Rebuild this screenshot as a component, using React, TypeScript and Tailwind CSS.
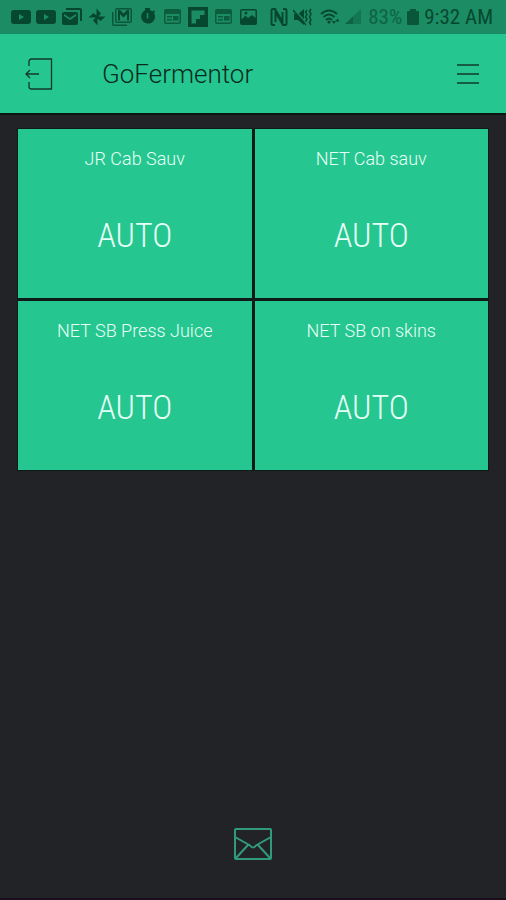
import React from 'react';

interface Tank {
    id: number;
    name: string;
    mode: string;
}

const tanks: Tank[] = [
    { id: 1, name: 'JR Cab Sauv', mode: 'AUTO' },
    { id: 2, name: 'NET Cab sauv', mode: 'AUTO' },
    { id: 3, name: 'NET SB Press Juice', mode: 'AUTO' },
    { id: 4, name: 'NET SB on skins', mode: 'AUTO' },
];

const StatusIcon: React.FC<{ children: React.ReactNode }> = ({ children }) => (
    <svg viewBox="0 0 20 20" className="h-5 w-5 shrink-0" fill="currentColor" aria-hidden="true">
        {children}
    </svg>
);

const VideoIcon = () => (
    <StatusIcon>
        <path fillRule="evenodd" d="M3 3h14a3 3 0 0 1 3 3v8a3 3 0 0 1-3 3H3a3 3 0 0 1-3-3V6a3 3 0 0 1 3-3zm5 4v6l5-3z" />
    </StatusIcon>
);

const CardIcon = () => (
    <StatusIcon>
        <g className="opacity-70">
            <path fillRule="evenodd" d="M3 2h13a2 2 0 0 1 2 2v11a2 2 0 0 1-2 2H3a2 2 0 0 1-2-2V4a2 2 0 0 1 2-2zm-.5 5v8.500h14V7z" />
            <path d="M4 9h5v1.500H4zM4 12h5v1.500H4zM10 9h5.500v4.500H10z" />
        </g>
    </StatusIcon>
);

const StatusBar: React.FC = () => (
    <div className="flex h-[34px] items-center bg-[#1b8c64] pl-[11px] pr-[13px] text-[#06482f]">
        <div className="mr-[11px] flex flex-1 items-center justify-between">
            <VideoIcon />
            <VideoIcon />
            {/* Mail stack */}
            <StatusIcon>
                <path d="M4 1h14a2 2 0 0 1 2 2v11h-2V3H4z" />
                <path fillRule="evenodd" d="M2 5h12a2 2 0 0 1 2 2v9a2 2 0 0 1-2 2H2a2 2 0 0 1-2-2V7a2 2 0 0 1 2-2zm0 2v2l6 4 6-4V7l-6 4z" />
            </StatusIcon>
            {/* Pinwheel */}
            <StatusIcon>
                <path d="M9.500 10V1.500L14 6.500l-3 3.500zM10 9.500h8.500L13.500 14 10 11zM10.500 10v8.500L6 13.500 9 10zM10 10.500H1.500L6.500 6l3.500 3z" />
            </StatusIcon>
            {/* Gmail stack */}
            <StatusIcon>
                <path d="M0 5h1.500v12.500H15V19H2a2 2 0 0 1-2-2z" className="opacity-80" />
                <path fillRule="evenodd" d="M5 1h13a2 2 0 0 1 2 2v11a2 2 0 0 1-2 2H5a2 2 0 0 1-2-2V3a2 2 0 0 1 2-2zm-.5 1.500v12h14v-12z" className="opacity-80" />
                <path d="M6 3h2l3.500 3.500L15 3h2v10.500h-2V7l-3.500 3.500L8 7v6.500H6z" />
            </StatusIcon>
            {/* Timer */}
            <StatusIcon>
                <path fillRule="evenodd" d="M7 1h5v2.200a7 7 0 0 1 2.500 1.200l1.200-1.200 1.500 1.500-1.200 1.200A7 7 0 1 1 7 3.300zm1.800 5v5.500h1.500V6z" />
            </StatusIcon>
            <CardIcon />
            {/* Flipboard */}
            <StatusIcon>
                <path fillRule="evenodd" d="M0 0h20v20H0zM3.500 3.500v13H8V12h4V8h4.500V3.500z" />
            </StatusIcon>
            <CardIcon />
            {/* Picture */}
            <StatusIcon>
                <path fillRule="evenodd" d="M3 2h13a2 2 0 0 1 2 2v12a2 2 0 0 1-2 2H3a2 2 0 0 1-2-2V4a2 2 0 0 1 2-2zM2.500 3.500v9l4-4L9 11l4-3 3.500 3V3.500z" />
                <circle cx="7" cy="6" r="1.500" />
            </StatusIcon>
        </div>

        <div className="flex items-center">
            {/* NFC */}
            <svg viewBox="0 0 18 20" className="h-5 w-[18px]" fill="none" stroke="currentColor" strokeWidth="2" aria-hidden="true">
                <path d="M5 18H3Q1.500 18 1.500 16.500V3.500Q1.500 2 3 2h2l7.500 13V5M13 2h2q1.500 0 1.500 1.500v13Q16.500 18 15 18h-2L5.500 5v10" />
            </svg>
            {/* Vibrate / muted */}
            <svg viewBox="0 0 20 20" className="ml-[5px] h-5 w-5" fill="none" stroke="currentColor" aria-hidden="true">
                <path d="M1 7h4l6-5v16l-6-5H1z" fill="currentColor" stroke="none" />
                <path d="M1 2l13 15" stroke="#1b8c64" strokeWidth="1.500" />
                <path d="M0 3l13 15" strokeWidth="1.500" />
                <path d="M14 3l-1.500 2L14 7.500 12.500 10l1.500 2.500-1.500 2M18 2l-1.500 2.500L18 7l-1.500 3 1.500 3-1.500 2.500L18 18" strokeWidth="1.500" />
            </svg>
            {/* Wifi */}
            <svg viewBox="0 0 20 20" className="ml-[7px] h-5 w-5" fill="none" stroke="currentColor" strokeWidth="1.800" aria-hidden="true">
                <path d="M1 7q8-7 16 0M3.500 10q5.500-5 11 0M6 13q3-3 6 0" />
                <circle cx="9" cy="15" r="1.500" fill="currentColor" stroke="none" />
                <path d="M12 14l2 3 2-3zM15.500 14.500l2-3 2 3z" fill="currentColor" stroke="none" />
            </svg>
            {/* Signal */}
            <svg viewBox="0 0 18 20" className="ml-1 h-5 w-[18px] opacity-60" fill="currentColor" aria-hidden="true">
                <path d="M1 17L9 9.500V17z" />
                <path d="M9 9.500L17 2v15H9z" className="opacity-50" />
            </svg>
            <span className="ml-[6px] font-['Roboto_Condensed',Roboto,sans-serif] text-[21px] leading-6 opacity-60">83%</span>
            {/* Battery */}
            <svg viewBox="0 0 12 20" className="ml-[5px] h-5 w-3" fill="currentColor" aria-hidden="true">
                <path d="M3 2h6v2h2q1 0 1 1v12q0 1-1 1H1q-1 0-1-1V5q0-1 1-1h2z" className="opacity-80" />
            </svg>
            <span className="ml-[5px] font-['Roboto_Condensed',Roboto,sans-serif] text-[21px] leading-6">9:32 AM</span>
        </div>
    </div>
);

const Header: React.FC = () => (
    <header className="flex h-[79px] items-center bg-[#26c690] pl-[25px] pr-[27px] text-[#10382c]">
        <button type="button" aria-label="Log out">
            <svg viewBox="0 0 28 34" className="h-[34px] w-7" fill="none" stroke="currentColor" strokeWidth="1.300" aria-hidden="true">
                <path d="M4 9V4.500Q4 2 6.500 2H26.500v30H6.500Q4 32 4 29.500V25" />
                <path d="M14 17H1M5 13l-4 4 4 4" />
            </svg>
        </button>
        <h1 className="ml-[49px] flex-1 text-[26px] leading-8 font-light text-[#0b2a20]">GoFermentor</h1>
        <button type="button" aria-label="Menu">
            <svg viewBox="0 0 22 22" className="h-[22px] w-[22px]" stroke="currentColor" strokeWidth="1.500" aria-hidden="true">
                <path d="M0 2h22M0 11h22M0 20h22" />
            </svg>
        </button>
    </header>
);

const TankTile: React.FC<{ tank: Tank }> = ({ tank }) => (
    <button type="button" className="flex h-[169px] flex-col items-center bg-[#26c690] pt-[18px] text-[#e6fff6]">
        <span className="text-lg leading-6 font-light">{tank.name}</span>
        <span className="mt-10 font-['Roboto_Condensed',Roboto,sans-serif] text-[34px] leading-12 font-light">
            {tank.mode}
        </span>
    </button>
);

const App: React.FC = () => {
    return (
        <div className="flex min-h-screen flex-col border-b-2 border-[#190f1c] bg-[#222327] font-[Roboto,sans-serif]">
            <StatusBar />
            <Header />

            <main className="flex-1 border-t-2 border-[#0c1512] px-[17px] pt-[13px]">
                <div className="grid grid-cols-2 gap-[3px] border border-[#0f1b18] bg-[#0f1b18]">
                    {tanks.map((tank) => (
                        <TankTile key={tank.id} tank={tank} />
                    ))}
                </div>
            </main>

            <footer className="flex justify-center pb-[37px]">
                <button type="button" aria-label="Messages">
                    <svg viewBox="0 0 40 34" className="h-[34px] w-10" fill="none" stroke="#319b78" strokeWidth="2" aria-hidden="true">
                        <rect x="2" y="2" width="36" height="30" rx="1" />
                        <path d="M2 10l15 8.500q3 4 6 0L38 10M3 31l12-13M37 31L25 18" />
                    </svg>
                </button>
            </footer>
        </div>
    );
};

export default App;
